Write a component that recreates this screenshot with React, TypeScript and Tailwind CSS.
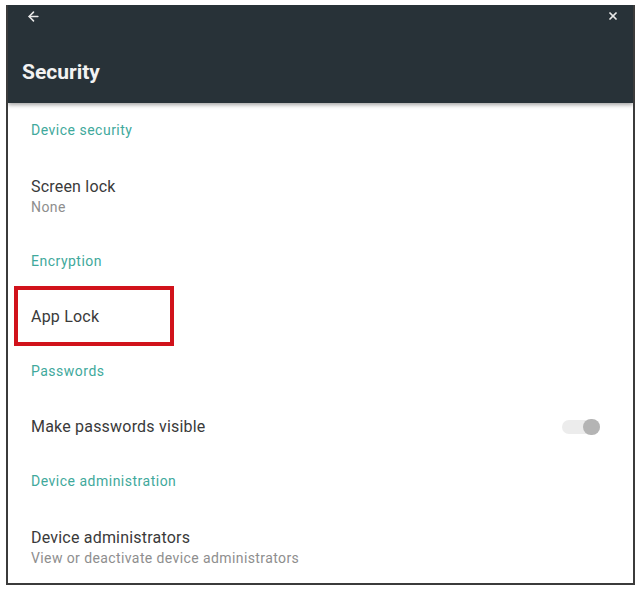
import { ArrowLeft, X } from "lucide-react";

type Row =
  | { kind: "section"; label: string }
  | { kind: "item"; title: string; summary?: string; toggle?: boolean; highlight?: boolean };

const rows: Row[] = [
  { kind: "section", label: "Device security" },
  { kind: "item", title: "Screen lock", summary: "None" },
  { kind: "section", label: "Encryption" },
  { kind: "item", title: "App Lock", highlight: true },
  { kind: "section", label: "Passwords" },
  { kind: "item", title: "Make passwords visible", toggle: true },
  { kind: "section", label: "Device administration" },
  { kind: "item", title: "Device administrators", summary: "View or deactivate device administrators" },
];

function Toggle() {
  return (
    <div className="relative mr-[33px] h-[14px] w-[38px] rounded-full bg-[#ececec]">
      <div className="absolute right-0 top-[-1px] h-[16px] w-[17px] rounded-full bg-[#b4b4b4]" />
    </div>
  );
}

export default function App() {
  return (
    <div className="h-[590px] w-[640px] bg-white pl-[6px] pt-[5px]" style={{ fontFamily: "Roboto, 'Noto Sans', sans-serif" }}>
      <div className="h-[580px] w-[629px] overflow-hidden border-2 border-t-0 border-[#3b3b3b] bg-white">
        {/* app bar */}
        <div className="relative z-10 flex h-[98px] flex-col bg-[#283238] shadow-[0_2px_4px_rgba(0,0,0,0.35)]">
          <div className="flex h-[22px] items-center justify-between pl-[18px] pr-[14px]">
            <ArrowLeft className="h-[15px] w-[15px] text-[#e8e8e8]" strokeWidth={2.5} />
            <X className="h-[12px] w-[12px] text-[#e8e8e8]" strokeWidth={3.5} />
          </div>
          <div className="pl-[14px] pt-[31px]">
            <h1 className="text-[21px] font-bold leading-[28px] text-[#f2f2f2]">Security</h1>
          </div>
        </div>

        <div className="flex flex-col">
          {rows.map((row, i) =>
            row.kind === "section" ? (
              <div key={i} className="flex h-[55px] items-center pl-[23px]">
                <span className="text-[14px] tracking-[0.5px] text-[#3fa99c]">{row.label}</span>
              </div>
            ) : (
              <div
                key={i}
                className={`relative flex items-center justify-between pl-[23px] ${row.summary ? "h-[76px]" : "h-[55px]"}`}
              >
                <div className="flex flex-col">
                  <span className="text-[16px] leading-[21px] tracking-[0.2px] text-[#3a3a3a]">{row.title}</span>
                  {row.summary && (
                    <span className="mt-[1px] text-[14px] leading-[18px] tracking-[0.4px] text-[#8e8e8e]">{row.summary}</span>
                  )}
                </div>
                {row.toggle && <Toggle />}
                {row.highlight && (
                  <div className="absolute left-[6px] top-[-3px] h-[60px] w-[160px] border-[4px] border-[#d1121b]" />
                )}
              </div>
            )
          )}
        </div>
      </div>
    </div>
  );
}
